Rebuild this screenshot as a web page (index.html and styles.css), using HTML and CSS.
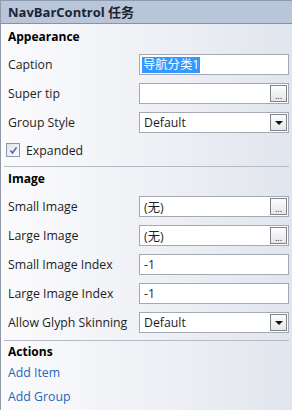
FILE: index.html
```html
<!DOCTYPE html>
<html lang="zh">
<head>
    <meta charset="UTF-8">
    <title>NavBarControl 任务</title>
    <link rel="stylesheet" href="styles.css">
</head>
<body>
    <div class="panel">
        <div class="panel-title">NavBarControl 任务</div>

        <div class="section first">
            <div class="section-title">Appearance</div>
            <div class="row">
                <div class="label">Caption</div>
                <div class="field"><span class="selected">导航分类1</span></div>
            </div>
            <div class="row">
                <div class="label">Super tip</div>
                <div class="field"><span class="value"></span><span class="btn dots">...</span></div>
            </div>
            <div class="row">
                <div class="label">Group Style</div>
                <div class="field"><span class="value">Default</span><span class="btn arrow"></span></div>
            </div>
            <div class="check-row">
                <span class="checkbox">
                    <svg width="9" height="9" viewBox="0 0 9 9"><path d="M1.5 4.5 L3.5 7 L7.5 1.5" fill="none" stroke="#4a64a8" stroke-width="1.4"/></svg>
                </span>
                <span>Expanded</span>
            </div>
        </div>

        <div class="section">
            <div class="section-title">Image</div>
            <div class="row">
                <div class="label">Small Image</div>
                <div class="field"><span class="value">(无)</span><span class="btn dots">...</span></div>
            </div>
            <div class="row">
                <div class="label">Large Image</div>
                <div class="field"><span class="value">(无)</span><span class="btn dots">...</span></div>
            </div>
            <div class="row">
                <div class="label">Small Image Index</div>
                <div class="field"><span class="value">-1</span></div>
            </div>
            <div class="row">
                <div class="label">Large Image Index</div>
                <div class="field"><span class="value">-1</span></div>
            </div>
            <div class="row">
                <div class="label">Allow Glyph Skinning</div>
                <div class="field"><span class="value">Default</span><span class="btn arrow"></span></div>
            </div>
        </div>

        <div class="section last">
            <div class="section-title">Actions</div>
            <a class="action" href="#">Add Item</a>
            <a class="action" href="#">Add Group</a>
        </div>
    </div>
</body>
</html>
```

FILE: styles.css
```css
body {
    margin: 0;
    padding: 0;
    font-family: 'Open Sans', 'Noto Sans CJK SC', sans-serif;
    font-size: 12.3px;
    color: #1e1e1e;
}
.panel {
    width: 291px;
    height: 410px;
    border-left: 1px solid #8f99a8;
    background: linear-gradient(to right, #fbfbfd 0%, #eef0f5 55%, #e1e5ed 100%);
    overflow: hidden;
}
.panel-title {
    height: 22px;
    line-height: 22px;
    padding-left: 7px;
    background: #b9c5d8;
    border-top: 1px solid #8c9ab2;
    border-bottom: 1px solid #8592a8;
    font-weight: 700;
    color: #1c2434;
    font-size: 13px;
}
.section {
    padding: 2px 0 3px 0;
    border-bottom: 1px solid #b5bac4;
    margin: 0 3px 0 3px;
}
.section.first {
    padding-top: 3px;
}
.section.last {
    padding-top: 1px;
    border-bottom: none;
}
.section-title {
    font-weight: 700;
    font-size: 12px;
    line-height: 18px;
    padding: 1px 0 0 4px;
    margin-bottom: 4px;
    color: #000;
}
.section.last .section-title {
    margin-bottom: 0;
}
.row {
    display: grid;
    grid-template-columns: 135px 1fr;
    align-items: center;
    height: 29px;
}
.label {
    padding-left: 4px;
    white-space: nowrap;
}
.field {
    display: flex;
    align-items: center;
    height: 19px;
    border: 1px solid #a4a9b3;
    background: #fff;
    padding: 0 1px 0 4px;
}
.field .value {
    flex: 1;
}
.selected {
    background: #3399ff;
    color: #fff;
    padding: 0 1px;
    margin-left: -2px;
    line-height: 16px;
}
.btn {
    width: 15px;
    height: 15px;
    border: 1px solid #7f848c;
    background: linear-gradient(#fdfdfd, #e6e6e6);
    display: flex;
    align-items: flex-end;
    justify-content: center;
    font-size: 9px;
    line-height: 11px;
    color: #222;
}
.btn.arrow {
    align-items: center;
}
.btn.arrow::after {
    content: "";
    border-left: 4px solid transparent;
    border-right: 4px solid transparent;
    border-top: 4px solid #111;
    margin-top: 1px;
}
.check-row {
    display: flex;
    align-items: center;
    gap: 6px;
    height: 26px;
    padding-left: 2px;
}
.checkbox {
    width: 12px;
    height: 12px;
    border: 1px solid #8e96a4;
    background: linear-gradient(135deg, #dfe3ea, #fafbfc);
    display: flex;
    align-items: center;
    justify-content: center;
}
.action {
    display: block;
    padding-left: 4px;
    line-height: 24px;
    color: #2865b8;
    text-decoration: none;
}
```
